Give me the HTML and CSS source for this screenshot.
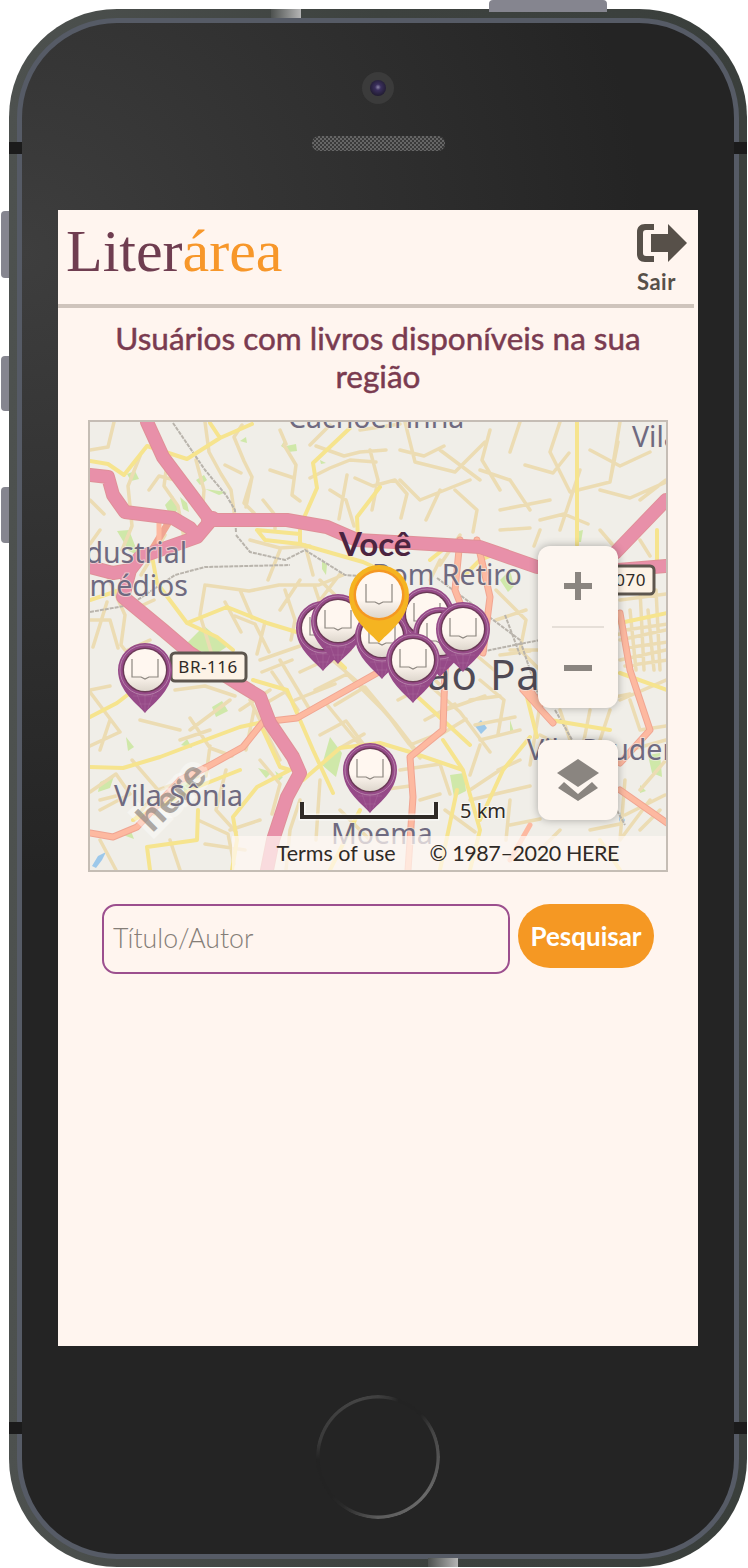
FILE: index.html
```html
<!DOCTYPE html>
<html lang="pt-BR">
  <head>
    <meta charset="UTF-8" />
    <title>Literárea</title>
    <link rel="stylesheet" href="styles.css">
  </head>
  <body>
    <div class="phone">
      <div class="side-btn side-top"></div>
      <div class="side-btn side-a"></div>
      <div class="side-btn side-b"></div>
      <div class="side-btn side-c"></div>
      <div class="slice slice-top"></div>
      <div class="slice slice-bottom"></div>
      <div class="band band-l1"></div>
      <div class="band band-r1"></div>
      <div class="band band-l2"></div>
      <div class="band band-r2"></div>

      <div class="bezel">
        <div class="camera"><div class="lens"></div></div>
        <div class="speaker"></div>

        <div class="screen">
          <div class="header">
            <div class="logo">Liter<span class="logo-accent">área</span></div>
            <div class="logout">
              <svg class="logout-icon" viewBox="0 0 50 38" width="50" height="38">
                <path d="M17 0H8C3 0 0 3 0 8V30C0 35 3 38 8 38H17V32H9C7 32 6 31 6 29V9C6 7 7 6 9 6H17Z" />
                <path d="M14 10H31V0L50 19L31 38V28H14Z" />
              </svg>
              <span class="logout-label">Sair</span>
            </div>
          </div>

          <h1 class="title">Usuários com livros disponíveis na sua região</h1>

          <div class="map">
            <svg class="map-canvas" viewBox="90 422 576 448" width="576" height="448">
              <defs>
                <linearGradient id="ball" x1="0" y1="0" x2="0" y2="1">
                  <stop offset="0.6" stop-color="#fff7f0" />
                  <stop offset="1" stop-color="#ded7cd" />
                </linearGradient>
                <path id="book" class="book" d="M-13 -11V7H-4L0 9L4 7H13V-11" />
                <g id="pin">
                  <path class="pin-body" d="M0 43C-6 35 -27 22 -27 0A27 27 0 1 1 27 0C27 22 6 35 0 43Z" />
                  <path class="pin-grid" d="M-12 26L12 26M-6 34L6 34M0 24V43M-8 24L-3 38M8 24L3 38" />
                  <circle class="pin-hi" r="25" />
                  <circle class="pin-ring" r="22.5" />
                  <circle r="21" fill="url(#ball)" />
                  <use href="#book" />
                </g>
                <g id="pin-me">
                  <path class="me-body" d="M0 48C-7 39 -30 25 -30 0A30 30 0 1 1 30 0C30 25 7 39 0 48Z" />
                  <circle class="me-ring" r="25.5" />
                  <circle r="23" fill="url(#ball)" />
                  <use href="#book" />
                </g>
              </defs>

              <rect class="land" x="90" y="422" width="576" height="448" />

              <path class="park" d="M127 474l8-3 4 8-8 2zM165 505l8-9 5 12-6 12zM180 497l7 6 2 9-6-3zM196 480l8-5 3 5-7 5zM205 489l22 3-8 3zM117 531l12-1 10 26-10-5zM240 441l6-4 1 6zM281 446l4-6 2 10zM286 446l10-2 1 7-9 1zM320 460l6 3-5 1zM322 559l5 6-1 10-4-6zM182 648l22-22 24 20-12 8zM212 707l10-6 6 10-12 6zM181 745l6-6 5 9zM126 737l8 10-6 4zM178 780l10-2 6 8-8 8zM100 782l14-6-4 12-12 4zM123 835l8-4 3 8zM275 771l8 6-4 4zM258 768l14 4-6 6zM402 665l8 16-6 6zM500 580l10-10 4 16-6 6zM648 755l12-2 2 24-10-4zM575 532l8-2-2 12-6 0zM450 775l14-2 2 18-12 6zM640 785l6 6-6 2zM330 737l-8 28 14 12 6-24zM510 720l4 12-4 2z" />
              <path class="water" d="M475 726l6-6 6 8-6 6zM92 866l6-10 8-4-4 8-6 8zM620 812l5 8-3 6-3-6z" />

              <path class="road-minor" d="M90 450l18-3 6-25M140 456l-12 30 4 40-10 24M168 456l-4 30 14 20 6 32M196 460l8 30-2 26M100 530l-10 14M107 575l18 40-4 30 20 25M107 602l-14 45M205 422l4 30 12 22 10 16 4 28M242 425l-8 12 10 24 8 16-8 26 10 10M252 477l-6 30M263 500l12 15 0 14M284 445l12 20-4 30 8 6M316 446l28 10 16-4 26-2M310 478l20-10 20-8 26 2M330 490l16 10 8 26M347 475l-8 44M90 620h20l8 28M165 535l-24 40M205 585l44 6 30-6 40 0 24-10M205 585l-5 30 12 40M225 602l16 30M240 590l12 28M285 590l10 30 -4 20M314 585l10 30M340 574l-26 34M250 540l30 8 30-2M280 550l-12 30M305 545l8 30M235 616l20 8 14 28M265 622l-8 32M90 690l20-4M90 692l30 40-30 14M90 792l26-18 14 20-30 16M132 760l26 30 -4 24M158 790l40-14M190 718l20 30 22 8M210 746l-4 30M230 700l-40 30M254 710l-8 40M260 760l20 24 -8 30M270 690l-30 20M226 770l-10 40 20 22M198 820l30 14 6 30M170 840l10 30M100 840l16 30M300 800l-10 30 -4 40M320 780l-4 60M340 810l30 30M480 740l40 -10M500 770l-30 20M470 800l60 -14M445 810l30 22M510 800l-4 40M560 830l-30 30M540 735l40 20M620 700l46 -20M630 750l36 -10M625 780l-5 60M650 800l-30 40M666 760l-26 30M496 590l30 30 -6 30 30 30 M496 620l30 -10M510 650h30M620 640l46 -10M620 660l46 -10M620 600l46 -6M640 590l4 80M656 590l4 80M540 705l-10 60M560 710l10 30M590 710l-6 30M610 710l-10 30M460 535l-20 30M430 580l10 -20M480 470l30 10 20 30M520 422l-10 30M560 422l-10 30 20 40 40 -10 8 -40M580 470l-20 60M620 422l-10 60M640 500l26 -20M500 510l50 -10M420 500l50 -20M405 422l10 40 40 10 30 -30M400 480l20 20M360 430l40 -6M440 450l40 30M355 478l18 8 22 -6 12 14 -6 24M370 450l8 30 -6 30M400 450l24 6 20 -10M440 490l-14 30M455 490l22 20 -4 22M490 430l-8 30 18 30M525 465l28 8 16 -20M590 450l30 16 30 -14M600 490l30 8 36 -16M540 520l24 -6 24 10M500 530l30 -2M310 445l20 -20M280 430l6 14M270 470l24 8M225 465l16 8M175 480l-16 -4 -10 14M112 500l20 10M90 500l14 14M132 610l22 -10M150 640l-22 10M175 690l30 -4 30 10M140 720l40 10M110 720l-10 30M180 740l30 -10M150 800l-16 20M260 820l-30 10M245 850l-40 -6M100 800l16 -4M470 650l24 20M480 745l-10 30M520 760l-22 10M510 825l30 -6M555 770l-8 30M590 830l30 -6M640 830l20 -20M630 700l10 30 26 -4M625 815l40 -20M300 580l-20 30M340 600l-20 -20M540 530l-6 16M600 530l12 14M640 540l10 16" />
              <path class="road-dense" d="M300 672l30-14 30 26 30 34 30 40M315 690l32-16 40 40 22 30M335 705l30-18 30 36 20 26M295 700l40-16M300 715l24 -14 36 44 14 22M320 735l26 -14 24 32M340 748l24 -14M250 700l30 60M280 660l30 50M272 672l26 38M260 660l40 -14M262 672l30 -12M285 692l-24 14M350 650l-20 12M398 700l30 -16 32 28 30 40M425 720l30 -16M440 735l26 -16M410 745l30 -12M400 770l40 -6 10 30M380 790l30 -4M420 800l20 -6M445 690l-16 -16M480 680l24 20 -6 34M500 655l30 -4M470 700l30 -4M445 710l40 -14M475 725l40 -8M580 640l40 -6M600 700l30 -6M630 610l6 60M648 610l6 60M625 630l42 -6M625 648l42 -6M625 666l42 -6" />

              <path class="rail" d="M173 423L205 470L226 495L235 510L236 533M236 535L250 552L285 560L305 550L345 575L395 578M90 612L130 605L175 575L205 567L290 565M437 578L480 610L520 640L540 700M425 668L490 650L540 640M505 615L520 655M555 710L575 745L590 770M600 780L625 825" />

              <path class="road-yellow" d="M90 461L108 464L124 475L147 446L187 459L220 438L210 423M220 438L252 424M350 428L313 463L317 488L303 520M380 487L357 517L358 540M257 530L265 540L300 544L363 562L385 572M257 530L300 534M300 530L300 544M152 556L157 583L187 623L217 637L233 650M187 623L227 607L267 623L313 637L345 668M90 717L117 703L130 693M90 767L123 768L160 757L197 743L240 727L263 722M263 730L280 767L290 770L257 787L233 817L237 840L232 870M133 820L197 787L240 770M198 810L197 840L147 847L150 870M287 690L313 750L333 793M253 680L287 690M303 780L340 748L380 743M380 743L410 752L463 770L480 830L470 870M443 740L463 770M530 737L503 770L480 820M457 790L440 870M527 697L537 737M620 673L667 690M620 623L667 613M657 530V563M577 422V545M90 600L120 590M395 676L470 745M465 575L480 560L500 552M430 560L445 548M550 720L610 730M360 810L330 870M600 840L620 870" />

              <path class="road-trunk-edge" d="M377 673L297 718L263 722L243 747L207 767L180 780L137 827L113 837L90 833M460 540L455 590L460 603L445 670L443 730L410 757L413 797L408 870M477 540L490 597L483 653M523 690L553 723M540 705L530 690M620 613L630 670L650 730L620 763M620 790L667 823M150 553L170 520" />
              <path class="road-trunk" d="M377 673L297 718L263 722L243 747L207 767L180 780L137 827L113 837L90 833M460 540L455 590L460 603L445 670L443 730L410 757L413 797L408 870M477 540L490 597L483 653M523 690L553 723M540 705L530 690M620 613L630 670L650 730L620 763M620 790L667 823M159 515L159 545M510 860L530 825" />

              <path class="road-motor-edge" d="M147 422L163 457L208 517M90 475L108 477L113 495L125 512L173 518L190 528L197 537M213 518L197 537L180 543L140 557L130 570L113 573L90 567M130 570L123 597L163 630L190 653L237 683L260 697L270 723L293 757L300 773L287 797L273 840L267 870M208 520L287 520L327 527L357 540L413 543L480 547L537 567M615 553L666 500M618 570L666 566" />
              <path class="road-motor" d="M147 422L163 457L208 517M90 475L108 477L113 495L125 512L173 518L190 528L197 537M213 518L197 537L180 543L140 557L130 570L113 573L90 567M130 570L123 597L163 630L190 653L237 683L260 697L270 723L293 757L300 773L287 797L273 840L267 870M208 520L287 520L327 527L357 540L413 543L480 547L537 567M615 553L666 500M618 570L666 566" />

              <g class="watermark" transform="rotate(-45 172 797)">
                <text class="wm-halo" x="172" y="809">here</text>
                <text class="wm-text" x="172" y="809">here</text>
              </g>

              <text class="label" x="288" y="428">Cachoeirinha</text>
              <text class="label" x="632" y="447">Vila</text>
              <text class="label label-end" x="187" y="563">Industrial</text>
              <text class="label label-end" x="188" y="596">Remédios</text>
              <text class="label" x="372" y="585">Bom Retiro</text>
              <text class="label" x="114" y="806">Vila Sônia</text>
              <text class="label" x="527" y="760">Vila Prudente</text>
              <text class="label" x="331" y="844">Moema</text>
              <text class="city" x="403" y="690">São Paulo</text>

              <g class="shield">
                <rect x="171" y="653" width="75" height="28" rx="4" />
                <text x="208" y="673">BR-116</text>
              </g>
              <g class="shield">
                <rect x="590" y="566" width="64" height="28" rx="4" />
                <text class="shield-end" x="646" y="586">SP-070</text>
              </g>

              <path class="scale-halo" d="M302 803V817H436V803" />
              <path class="scale-bar" d="M302 802V817H436V802" />
              <text class="scale-text" x="460" y="818">5 km</text>

              <use href="#pin" x="145" y="670" />
              <use href="#pin" x="370" y="770" />
              <use href="#pin" x="323" y="628" />
              <use href="#pin" x="338" y="621" />
              <use href="#pin" x="427" y="614" />
              <use href="#pin" x="382" y="636" />
              <use href="#pin" x="440" y="634" />
              <use href="#pin" x="463" y="629" />
              <use href="#pin" x="413" y="660" />
              <use href="#pin-me" x="379" y="595" />

              <text class="you" x="339" y="556">Você</text>
            </svg>

            <div class="map-controls">
              <div class="ctrl-box">
                <button class="ctrl-btn" aria-label="Zoom in">
                  <svg viewBox="0 0 28 28" width="28" height="28"><path d="M11 0H17V11H28V17H17V28H11V17H0V11H11Z" /></svg>
                </button>
                <div class="ctrl-divider"></div>
                <button class="ctrl-btn" aria-label="Zoom out">
                  <svg viewBox="0 0 28 6" width="28" height="6"><path d="M0 0H28V6H0Z" /></svg>
                </button>
              </div>
              <div class="ctrl-box">
                <button class="ctrl-btn ctrl-layers" aria-label="Layers">
                  <svg viewBox="0 0 44 42" width="44" height="42"><path d="M22 0L43 14L22 28L1 14Z" /><path d="M8 23L2 29L22 42L42 29L36 23L22 35Z" /></svg>
                </button>
              </div>
            </div>

            <div class="attribution">
              <span>Terms of use</span>
              <span class="copyright">© 1987–2020 HERE</span>
            </div>
          </div>

          <form class="search">
            <input class="search-input" type="text" placeholder="Título/Autor">
            <button class="search-btn" type="button">Pesquisar</button>
          </form>
        </div>

        <div class="home"></div>
      </div>
    </div>
  </body>
</html>
```

FILE: styles.css
```css
body {
  margin: 0;
  padding: 0;
  background-color: #ffffff;
  font-family: Lato, Arial, sans-serif;
  overflow: hidden;
}

/* phone shell */
.phone {
  position: relative;
  box-sizing: border-box;
  width: 738px;
  height: 1558px;
  margin: 9px 0 0 9px;
  padding: 9px 8px 8px;
  border-radius: 108px;
  background: linear-gradient(90deg, #4d514f, #3d423f 50%, #3a3f3c);
}
.bezel {
  box-sizing: border-box;
  height: 100%;
  display: flex;
  flex-direction: column;
  align-items: center;
  border: 5px solid #565b66;
  border-radius: 100px;
  background: radial-gradient(circle at 0 15%, #3e3e3e, #242424 42%);
  background-color: #232323;
}
.side-btn {
  position: absolute;
  background-color: #85858f;
  border-radius: 4px 0 0 4px;
}
.side-top {
  top: -9px;
  left: 480px;
  width: 118px;
  height: 12px;
  border-radius: 4px 4px 0 0;
}
.side-a { top: 202px; left: -8px; width: 8px; height: 67px; }
.side-b { top: 347px; left: -8px; width: 8px; height: 55px; }
.side-c { top: 478px; left: -8px; width: 8px; height: 56px; }
.slice {
  position: absolute;
  width: 30px;
  height: 9px;
  background: linear-gradient(90deg, #4d514f, #b5b5b5);
}
.slice-top { top: 0; left: 262px; }
.slice-bottom { bottom: 0; left: 419px; }
.band {
  position: absolute;
  width: 13px;
  height: 12px;
  background-color: #1b1b1b;
}
.band-l1 { top: 133px; left: 0; }
.band-r1 { top: 133px; right: 0; }
.band-l2 { top: 1413px; left: 0; }
.band-r2 { top: 1413px; right: 0; }

.camera {
  flex: none;
  width: 32px;
  height: 32px;
  margin-top: 49px;
  display: flex;
  align-items: center;
  justify-content: center;
  border-radius: 50%;
  background-color: #3b3b3b;
}
.lens {
  width: 16px;
  height: 16px;
  border-radius: 50%;
  background: radial-gradient(circle at 50% 45%, #8d86a8 0, #3a2f5c 25%, #201b30 75%);
}
.speaker {
  flex: none;
  width: 133px;
  height: 15px;
  margin-top: 32px;
  border-radius: 7px;
  background: repeating-conic-gradient(#666 0 25%, #3a3a3a 0 50%) 0 0 / 4px 4px;
}
.home {
  flex: none;
  box-sizing: border-box;
  width: 124px;
  height: 124px;
  margin-top: 49px;
  border-radius: 50%;
  background: conic-gradient(#3f3f3f 0deg, #333 12deg, #232323 20deg, #232323 45deg, #454545 65deg, #6a6a6a 130deg, #5c5c5c 180deg, #2a2a2a 215deg, #232323 230deg, #232323 268deg, #3a3a3a 285deg, #444 340deg, #3f3f3f 360deg);
  -webkit-mask: radial-gradient(circle, transparent 58px, #000 59px);
  mask: radial-gradient(circle, transparent 58px, #000 59px);
}

/* app screen */
.screen {
  flex: none;
  width: 640px;
  height: 1136px;
  margin-top: 59px;
  background-color: #fff5ef;
}
.header {
  box-sizing: border-box;
  width: 636px;
  height: 98px;
  padding: 0 8px;
  display: flex;
  align-items: flex-start;
  justify-content: space-between;
  border-bottom: 4px solid #cfc4bc;
}
.logo {
  margin-top: 6px;
  font-family: "Liberation Serif", serif;
  font-size: 60px;
  line-height: 70px;
  color: #6f3d50;
}
.logo-accent {
  color: #f7972a;
}
.logout {
  margin-top: 14px;
  margin-right: -1px;
  display: flex;
  flex-direction: column;
  align-items: flex-start;
}
.logout-icon {
  display: block;
  fill: #575049;
}
.logout-label {
  margin-top: 8px;
  font-size: 22px;
  line-height: 24px;
  font-weight: 700;
  letter-spacing: 0.5px;
  color: #575049;
}
.title {
  margin: 11px 48px 0;
  font-size: 31.5px;
  line-height: 38px;
  font-weight: 400;
  text-align: center;
  color: #7a3b50;
  -webkit-text-stroke: 0.5px #7a3b50;
}
.map {
  position: relative;
  box-sizing: border-box;
  width: 580px;
  height: 452px;
  margin: 25px 0 0 30px;
  border: 2px solid #c5bdb5;
  overflow: hidden;
}
.map-canvas {
  display: block;
}

/* map drawing */
.land { fill: #f0eee8; }
.park { fill: #cfe8a9; }
.water { fill: #9cc8ea; }
.road-minor, .road-dense, .road-yellow, .road-trunk, .road-trunk-edge, .road-motor, .road-motor-edge, .rail {
  fill: none;
  stroke-linejoin: round;
  stroke-linecap: round;
}
.road-minor { stroke: #ecdcb3; stroke-width: 3.5; }
.road-dense { stroke: #ecdcb3; stroke-width: 3.5; }
.road-yellow { stroke: #f6e48e; stroke-width: 4; }
.rail { stroke: #b9b4ac; stroke-width: 2; stroke-dasharray: 4 1; stroke-linecap: butt; }
.road-trunk-edge { stroke: #f0a592; stroke-width: 7; }
.road-trunk { stroke: #fdb9a0; stroke-width: 5; }
.road-motor-edge { stroke: #e09098; stroke-width: 14; }
.road-motor { stroke: #e890a9; stroke-width: 12; }

.label, .city, .scale-text, .shield text {
  font-family: "Noto Sans", "DejaVu Sans", sans-serif;
}
.label {
  font-size: 28.5px;
  fill: #6f6a80;
  stroke: #f0eee8;
  stroke-width: 2px;
  stroke-opacity: 0.6;
  paint-order: stroke;
}
.label-end { text-anchor: end; }
.city {
  font-size: 42px;
  letter-spacing: 1px;
  fill: #4f4a55;
  stroke: #f0eee8;
  stroke-width: 2px;
  stroke-opacity: 0.6;
  paint-order: stroke;
}
.you {
  font-family: Lato, sans-serif;
  font-size: 33px;
  font-weight: 700;
  fill: #4b2440;
}
.shield rect {
  fill: #fdf3e6;
  stroke: #5d564e;
  stroke-width: 3;
}
.shield text {
  font-size: 17px;
  fill: #2f2a26;
  text-anchor: middle;
  letter-spacing: 0.5px;
}
.shield .shield-end { text-anchor: end; }
.scale-halo {
  fill: none;
  stroke: #fff;
  stroke-width: 7;
  stroke-opacity: 0.6;
}
.scale-bar {
  fill: none;
  stroke: #2f2a26;
  stroke-width: 4;
}
.scale-text {
  font-size: 20px;
  fill: #2f2a26;
  stroke: #fff;
  stroke-width: 2px;
  stroke-opacity: 0.6;
  paint-order: stroke;
}
.wm-halo, .wm-text {
  font-family: "Liberation Sans", sans-serif;
  font-size: 38px;
  font-weight: 700;
  text-anchor: middle;
}
.wm-halo { fill: none; stroke: #fff; stroke-width: 10px; stroke-opacity: 0.4; }
.wm-text { fill: #8d857f; fill-opacity: 0.7; }

/* pins */
.pin-body { fill: #964a88; }
.pin-grid { fill: none; stroke: #b57aa8; stroke-width: 0.5; stroke-opacity: 0.6; }
.pin-hi { fill: none; stroke: #b57fa8; stroke-width: 1; }
.pin-ring { fill: #6c3a58; }
.me-body { fill: #f5b421; }
.me-ring { fill: #f59823; }
.book { fill: none; stroke: #8d8780; stroke-width: 1.2; }

/* map controls */
.map-controls {
  position: absolute;
  top: 124px;
  left: 448px;
  display: flex;
  flex-direction: column;
  gap: 32px;
}
.ctrl-box {
  width: 80px;
  background-color: #fdf6f0;
  border-radius: 12px;
  box-shadow: 0 0 8px rgba(0, 0, 0, 0.3);
  display: flex;
  flex-direction: column;
  align-items: center;
}
.ctrl-btn {
  width: 80px;
  height: 80px;
  padding: 0;
  border: none;
  background: none;
  display: flex;
  align-items: center;
  justify-content: center;
}
.ctrl-btn svg {
  fill: #8a8580;
}
.ctrl-divider {
  width: 52px;
  height: 2px;
  background-color: #e6dfd8;
}
.attribution {
  position: absolute;
  left: 142px;
  right: 0;
  bottom: 0;
  box-sizing: border-box;
  height: 34px;
  padding-right: 47px;
  display: flex;
  align-items: center;
  justify-content: flex-end;
  gap: 34px;
  background-color: rgba(255, 248, 242, 0.72);
  font-family: Lato, sans-serif;
  font-size: 21.5px;
  color: #2f2a26;
}
.copyright {
  letter-spacing: -0.4px;
}

/* search */
.search {
  margin: 32px 0 0 44px;
  display: flex;
  align-items: flex-start;
  gap: 8px;
}
.search-input {
  box-sizing: border-box;
  width: 408px;
  height: 70px;
  padding: 0 9px 2px;
  border: 2px solid #9c4f8e;
  border-radius: 14px;
  background-color: transparent;
  font-family: Lato, sans-serif;
  font-size: 26.7px;
  font-weight: 300;
}
.search-input::placeholder {
  color: #857e78;
  opacity: 1;
}
.search-btn {
  width: 136px;
  height: 64px;
  padding: 0;
  border: none;
  border-radius: 32px;
  background-color: #f59823;
  font-family: Lato, sans-serif;
  font-size: 26px;
  font-weight: 700;
  color: #ffffff;
}
```
